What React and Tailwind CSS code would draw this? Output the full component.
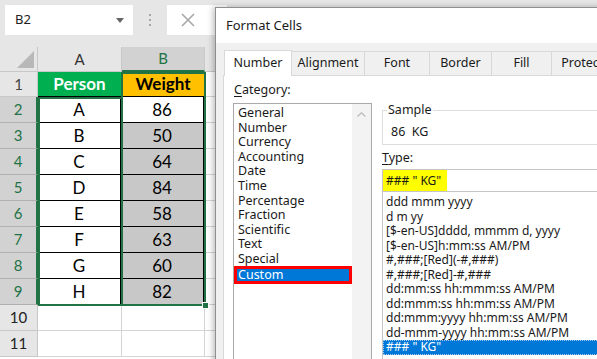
import React from 'react';

// sheet data
const people = [
  ['A', '86'],
  ['B', '50'],
  ['C', '64'],
  ['D', '84'],
  ['E', '58'],
  ['F', '63'],
  ['G', '60'],
  ['H', '82'],
];

const categories = [
  'General', 'Number', 'Currency', 'Accounting', 'Date', 'Time',
  'Percentage', 'Fraction', 'Scientific', 'Text', 'Special',
];

const formats = [
  'ddd mmm yyyy',
  'd m yy',
  '[$-en-US]dddd, mmmm d, yyyy',
  '[$-en-US]h:mm:ss AM/PM',
  '#,###;[Red](-#,###)',
  '#,###;[Red]-#,###',
  'dd:mm:ss hh:mmm:ss AM/PM',
  'dd:mmm:ss hh:mm:ss AM/PM',
  'dd:mmm:yyyy hh:mm:ss AM/PM',
  'dd-mmm-yyyy hh:mm:ss AM/PM',
];

const tabs = [
  { label: 'Number', w: 'w-[68px]', active: true },
  { label: 'Alignment', w: 'w-[73px]' },
  { label: 'Font', w: 'w-[65px]' },
  { label: 'Border', w: 'w-[62px]' },
  { label: 'Fill', w: 'w-[60px]' },
  { label: 'Protection', w: 'w-[80px]' },
];

function FormulaBar() {
  return (
    <div className="h-[47px] bg-[#e6e6e6] flex items-start pt-[5px] pl-[5px] font-['Noto_Sans',sans-serif]">
      <div className="w-[128px] h-[30px] bg-white flex items-center justify-between pl-[10px] pr-[9px] text-[13px] text-[#222]">
        <span>B2</span>
        <svg width="8" height="5" viewBox="0 0 8 5">
          <path d="M0 0h8L4 5z" fill="#666" />
        </svg>
      </div>
      <div className="w-[34px] h-[30px] flex flex-col items-center justify-center gap-[3px]">
        <span className="w-[2px] h-[2px] bg-[#a6a6a6]" />
        <span className="w-[2px] h-[2px] bg-[#a6a6a6]" />
        <span className="w-[2px] h-[2px] bg-[#a6a6a6]" />
      </div>
      <div className="w-[60px] h-[30px] bg-white flex items-center pl-[14px]">
        <svg width="14" height="14" viewBox="0 0 14 14">
          <path d="M1 1l12 12M13 1L1 13" stroke="#a8a8a8" strokeWidth="1.6" />
        </svg>
      </div>
    </div>
  );
}

function Sheet() {
  return (
    <div className="relative font-['Lato',sans-serif]">
      {/* column headers */}
      <div className="flex h-[25px] bg-[#e6e6e6] text-[15px]">
        <div className="w-[38px] border-r border-b border-[#c8c8c8] flex items-end justify-end pr-[3px] pb-[3px]">
          <svg width="17" height="17" viewBox="0 0 17 17">
            <path d="M17 0V17H0z" fill="#b8b8b8" />
          </svg>
        </div>
        <div className="w-[84px] border-r border-b border-[#c8c8c8] flex items-center justify-center text-[#333]">A</div>
        <div className="w-[83px] bg-[#d2d2d2] border-r border-b-2 border-b-[#217346] border-r-[#c8c8c8] flex items-center justify-center text-[#217346]">B</div>
        <div className="flex-1 border-b border-[#c8c8c8]" />
      </div>

      {/* header row */}
      <div className="flex h-[25px] text-[17px] font-bold">
        <div className="w-[38px] bg-[#e6e6e6] border-r border-b border-[#c8c8c8] flex items-center justify-center text-[15px] font-normal text-[#444]">1</div>
        <div className="w-[84px] bg-[#00b050] border-r border-b border-black flex items-center justify-center text-white">Person</div>
        <div className="w-[83px] bg-[#ffc000] border-r border-b border-black flex items-center justify-center text-black">Weight</div>
        <div className="flex-1 border-b border-[#d4d4d4]" />
      </div>

      {people.map(([p, w], i) => (
        <div key={p} className="flex h-[26px] text-[17px] text-black">
          <div className="w-[38px] bg-[#d2d2d2] border-r-2 border-r-[#217346] border-b border-b-[#b0b0b0] flex items-center justify-center text-[15px] text-[#217346]">
            {i + 2}
          </div>
          <div className="w-[83px] bg-white border-r border-b border-black flex items-center justify-center">{p}</div>
          <div className={`w-[83px] ${i === 0 ? 'bg-white' : 'bg-[#c8c8c8]'} border-r border-b border-black flex items-center justify-center`}>
            {w}
          </div>
          <div className="flex-1 border-b border-[#d4d4d4]" />
        </div>
      ))}

      {[10, 11].map((n) => (
        <div key={n} className="flex h-[26px]">
          <div className="w-[38px] bg-[#e6e6e6] border-r border-b border-[#c8c8c8] flex items-center justify-center text-[15px] text-[#222]">
            {n}
          </div>
          <div className="w-[84px] border-r border-b border-[#d4d4d4]" />
          <div className="w-[83px] border-r border-b border-[#d4d4d4]" />
          <div className="flex-1 border-b border-[#d4d4d4]" />
        </div>
      ))}

      {/* selection outlines */}
      <div className="absolute left-[38px] top-[50px] w-[85px] h-[209px] border-2 border-[#217346] pointer-events-none" />
      <div className="absolute left-[121px] top-[25px] w-[85px] h-[234px] border-2 border-[#217346] pointer-events-none" />
      <div className="absolute left-[202px] top-[255px] w-[7px] h-[7px] bg-[#217346] border border-white pointer-events-none" />
    </div>
  );
}

function FormatCells() {
  return (
    <div className="absolute left-[215px] top-[7px] w-[400px] h-[370px] border border-[#8f8f8f] shadow-[-2px_0_6px_rgba(0,0,0,0.25)] bg-[#f0f0f0] font-['Noto_Sans',sans-serif] text-[12.5px] text-[#1a1a1a]">
      <div className="h-[35px] bg-white flex items-center pl-[10px] text-[13px]">Format Cells</div>

      <div className="px-[7px] pt-[7px]">
        {/* tabs */}
        <div className="flex pl-[1px] h-[25px]">
          {tabs.map((t) => (
            <div
              key={t.label}
              className={`${t.w} shrink-0 flex items-center justify-center border-t border-r border-[#d9d9d9] ${
                t.active ? 'bg-white border-l -mb-px h-[26px]' : 'bg-[#f0f0f0] mt-[1px]'
              }`}
            >
              {t.label}
            </div>
          ))}
        </div>

        {/* tab page */}
        <div className="bg-white border border-[#d9d9d9] h-[300px] flex pl-[9px]">
          {/* category column */}
          <div className="w-[139px] shrink-0 flex flex-col">
            <div className="h-[27px] pt-[5px] pl-[1px] leading-[18px]">
              <span className="underline underline-offset-2">C</span>ategory:
            </div>
            <div className="flex-1 border border-[#aaaaaa] flex">
              <div className="flex-1 pt-[2px] leading-[14.6px]">
                {categories.map((c) => (
                  <div key={c} className="pl-[4px]">{c}</div>
                ))}
                <div className="relative ml-[1px] mt-[1px] pl-[3px] bg-[#0078d7] text-white">
                  Custom
                  <span className="absolute -top-[2px] -bottom-[2px] -left-[1px] right-0 border-[3px] border-[#ff0000]" />
                </div>
              </div>
              <div className="w-[19px] bg-[#f3f3f3] flex flex-col">
                <div className="h-[21px] flex items-center justify-center">
                  <svg width="9" height="5" viewBox="0 0 9 5">
                    <path d="M0.5 4.5L4.5 0.8L8.5 4.5" stroke="#bdbdbd" strokeWidth="1.3" fill="none" />
                  </svg>
                </div>
              </div>
            </div>
          </div>

          {/* type column */}
          <div className="flex-1 ml-[10px] pt-[34px] flex flex-col">
            <div className="relative h-[35px] border border-[#dcdcdc] shrink-0">
              <span className="absolute -top-[10px] left-[4px] bg-white px-[1px] leading-[18px]">Sample</span>
              <div className="pl-[8px] pt-[13px] leading-[16px] whitespace-pre">86  KG</div>
            </div>
            <div className="h-[24px] pt-[4px] leading-[18px] shrink-0">
              <span className="underline underline-offset-2">T</span>ype:
            </div>
            <div className="h-[23px] border border-[#c4c4c4] flex shrink-0 text-[12px]">
              <div className="w-[64px] bg-[#ffff00] flex items-center pl-[3px] whitespace-pre">### " KG"</div>
            </div>
            <div className="flex-1 border border-t-0 border-[#c4c4c4] pt-[3px] text-[12px] leading-[14.5px] whitespace-pre">
              {formats.map((f) => (
                <div key={f} className="pl-[3px]">{f}</div>
              ))}
              <div className="pl-[3px] bg-[#0078d7] text-white outline outline-1 outline-dotted -outline-offset-1 outline-[#9cc8ee]">### " KG"</div>
            </div>
          </div>
        </div>
      </div>
    </div>
  );
}

export default function App() {
  return (
    <div className="relative w-[597px] h-[359px] overflow-hidden bg-white">
      <FormulaBar />
      <Sheet />
      <FormatCells />
    </div>
  );
}
